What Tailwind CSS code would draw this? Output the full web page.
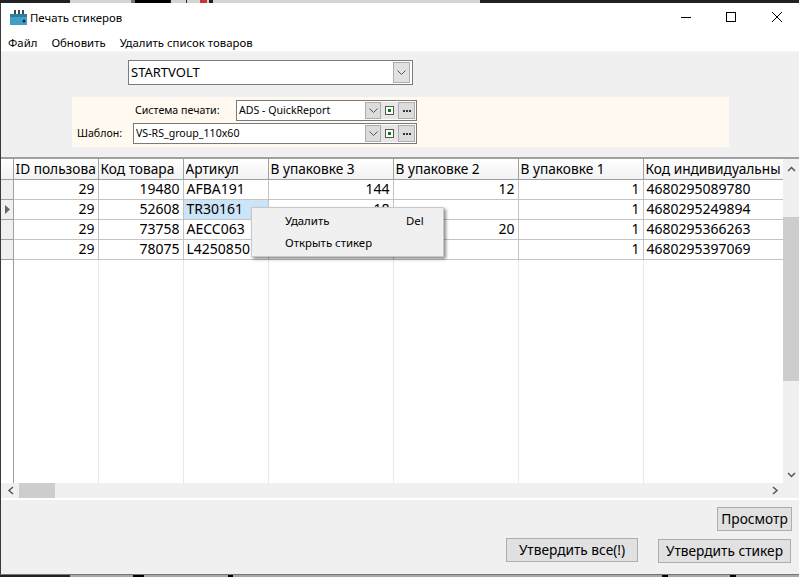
<!DOCTYPE html>
<html lang="ru">
<head>
  <meta charset="UTF-8" />
  <title>Печать стикеров</title>
  <script src="https://cdn.jsdelivr.net/npm/@tailwindcss/browser@4"></script>
</head>
<body class="w-[799px] h-[577px] overflow-hidden bg-[#f0f0f0] font-['Noto_Sans',sans-serif] text-black">
<div class="relative h-[577px] flex flex-col border-l border-[#3a3a3a]">
  <!-- other windows peeking out above -->
  <div class="h-[3px] bg-[#222] flex -ml-px">
    <div class="ml-[70px] w-[61px] bg-[#d4d4d4]"></div>
    <div class="w-[4px] bg-[#777]"></div>
    <div class="w-[35px] bg-black"></div>
    <div class="ml-px w-[15px] bg-[#d4d4d4]"></div>
    <div class="ml-px w-[13px] bg-[#d4d4d4]"></div>
    <div class="w-[7px] bg-[#c33]"></div>
    <div class="w-[2px] bg-[#d4d4d4]"></div>
    <div class="ml-[4px] w-[267px] bg-[#d4d4d4]"></div>
  </div>

  <!-- title -->
  <div class="h-[30px] bg-white flex items-center pl-[8px]">
    <svg width="20" height="18" viewBox="0 0 20 18"><rect x="5" y="1" width="2" height="4" fill="#445"/><rect x="9" y="1" width="2" height="4" fill="#445"/><rect x="13" y="1" width="2" height="4" fill="#445"/><rect x="1" y="5" width="17" height="11" fill="#3f9fc4"/><rect x="1" y="5" width="17" height="3" fill="#2d7f9f"/><circle cx="15" cy="12" r="1.5" fill="#223"/></svg>
    <span class="ml-[1px] text-[11.4px]">Печать стикеров</span>
    <div class="ml-auto flex items-center">
      <svg width="46" height="30" viewBox="0 0 46 30"><path d="M20 14.5h10" stroke="#000"/></svg>
      <svg width="46" height="30" viewBox="0 0 46 30"><rect x="19.5" y="9.5" width="9" height="9" fill="none" stroke="#000"/></svg>
      <svg width="46" height="30" viewBox="0 0 46 30"><path d="M19 9l10 10M29 9l-10 10" stroke="#000"/></svg>
    </div>
  </div>

  <!-- menu -->
  <div class="h-[18px] bg-white flex items-center gap-[14px] pl-[7px] pt-[1px] text-[11.4px]">
    <span>Файл</span><span>Обновить</span><span>Удалить список товаров</span>
  </div>
  <div class="h-[2px] bg-[#f4f4f4]"></div>

  <!-- filters -->
  <div class="h-[104px] pt-[7px] flex flex-col">
    <div class="ml-[127px] w-[285px] h-[25px] border border-[#7a7a7a] bg-white flex items-center justify-between pl-[2px] pr-[2px] text-[13px]">
      <span>STARTVOLT</span>
      <span class="w-[17px] h-[21px] bg-[#e1e1e1] border border-[#adadad] flex items-center justify-center"><svg width="9" height="5" viewBox="0 0 9 5"><path d="M0.5 0.5l4 4 4-4" fill="none" stroke="#555"/></svg></span>
    </div>
    <div class="ml-[71px] mt-[12px] w-[657px] h-[50px] bg-[#fff9ef] pt-[3px] text-[10.6px]">
      <div class="flex items-center h-[21px]">
        <span class="ml-[63px] w-[101px]">Система печати:</span>
        <div class="w-[181px] h-[21px] border border-[#7a7a7a] bg-white flex items-center pl-[2px] pr-[1px]">
          <span class="flex-1">ADS - QuickReport</span>
          <span class="w-[16px] h-[17px] bg-[#dcdcdc] border border-[#adadad] flex items-center justify-center"><svg width="9" height="5" viewBox="0 0 9 5"><path d="M0.5 0.5l4 4 4-4" fill="none" stroke="#555"/></svg></span>
          <span class="w-[17px] h-[17px] bg-[#e6e6e6] flex items-center justify-center"><span class="w-[9px] h-[9px] border border-[#555] bg-white flex items-center justify-center"><span class="w-[3px] h-[3px] bg-[#0a7a0a]"></span></span></span>
          <span class="w-[17px] h-[17px] bg-[#dcdcdc] border border-[#adadad] flex items-center justify-center gap-[1px]"><span class="w-[2px] h-[2px] bg-[#333]"></span><span class="w-[2px] h-[2px] bg-[#333]"></span><span class="w-[2px] h-[2px] bg-[#333]"></span></span>
        </div>
      </div>
      <div class="flex items-center h-[21px] mt-[2px]">
        <span class="ml-[5px] w-[56px]">Шаблон:</span>
        <div class="w-[284px] h-[21px] border border-[#7a7a7a] bg-white flex items-center pl-[2px] pr-[1px]">
          <span class="flex-1">VS-RS_group_110x60</span>
          <span class="w-[16px] h-[17px] bg-[#dcdcdc] border border-[#adadad] flex items-center justify-center"><svg width="9" height="5" viewBox="0 0 9 5"><path d="M0.5 0.5l4 4 4-4" fill="none" stroke="#555"/></svg></span>
          <span class="w-[17px] h-[17px] bg-[#e6e6e6] flex items-center justify-center"><span class="w-[9px] h-[9px] border border-[#555] bg-white flex items-center justify-center"><span class="w-[3px] h-[3px] bg-[#0a7a0a]"></span></span></span>
          <span class="w-[17px] h-[17px] bg-[#dcdcdc] border border-[#adadad] flex items-center justify-center gap-[1px]"><span class="w-[2px] h-[2px] bg-[#333]"></span><span class="w-[2px] h-[2px] bg-[#333]"></span><span class="w-[2px] h-[2px] bg-[#333]"></span></span>
        </div>
      </div>
    </div>
  </div>

  <!-- grid -->
  <div class="h-[326px] border-t-2 border-[#a0a0a0] flex bg-white overflow-hidden">
    <div class="w-[782px] overflow-hidden">
      <table class="table-fixed border-collapse w-[782px] text-[14px] leading-[18px]">
        <colgroup><col class="w-[12px]"><col class="w-[85px]"><col class="w-[85px]"><col class="w-[85px]"><col class="w-[125px]"><col class="w-[125px]"><col class="w-[125px]"><col class="w-[140px]"></colgroup>
        <thead id="head"></thead>
        <tbody id="rows"></tbody>
      </table>
    </div>
    <div class="w-[16px] bg-[#f0f0f0] flex flex-col items-center">
      <svg class="mt-[7px]" width="9" height="6" viewBox="0 0 9 6"><path d="M1 5l3.5-3.5L8 5" fill="none" stroke="#555" stroke-width="1.5"/></svg>
      <div class="mt-[45px] w-[16px] h-[164px] bg-[#cdcdcd]"></div>
      <svg class="mt-auto mb-[5px]" width="9" height="6" viewBox="0 0 9 6"><path d="M1 1l3.5 3.5L8 1" fill="none" stroke="#555" stroke-width="1.5"/></svg>
    </div>
  </div>

  <!-- horizontal scrollbar -->
  <div class="h-[15px] bg-[#f0f0f0] flex items-center pl-[6px] relative">
    <svg width="7" height="9" viewBox="0 0 7 9"><path d="M6 1L2 4.5 6 8" fill="none" stroke="#555" stroke-width="1.5"/></svg>
    <div class="ml-[5px] w-[36px] h-[15px] bg-[#cdcdcd]"></div>
    <svg class="ml-auto mr-[20px]" width="7" height="9" viewBox="0 0 7 9"><path d="M1 1l4 3.5L1 8" fill="none" stroke="#555" stroke-width="1.5"/></svg>
  </div>
  <div class="h-[2px] bg-white"></div>

  <!-- buttons -->
  <div class="flex-1 flex flex-col items-end pr-[7px] pt-[7px] text-[13.7px]">
    <button class="w-[75px] h-[24px] bg-[#e1e1e1] border border-[#adadad]">Просмотр</button>
    <div class="flex items-start mt-[7px] mr-[1px]">
      <button class="w-[132px] h-[24px] bg-[#e1e1e1] border border-[#adadad]">Утвердить все(!)</button>
      <button class="ml-[20px] mt-[1px] w-[133px] h-[24px] bg-[#e1e1e1] border border-[#adadad]">Утвердить стикер</button>
    </div>
  </div>

  <!-- context menu -->
  <div class="absolute left-[250px] top-[207px] w-[193px] h-[50px] bg-[#f0f0f0] border border-[#c8c8c8] shadow-[2px_2px_3px_rgba(0,0,0,0.45)] text-[11.4px] pl-[33px] pt-[2px]">
    <div class="h-[22px] flex items-center"><span class="w-[121px]">Удалить</span><span>Del</span></div>
    <div class="h-[22px] flex items-center">Открыть стикер</div>
  </div>

  <!-- windows below -->
  <div class="absolute -left-px right-0 bottom-0 h-[3px] bg-[#a8a8a8] border-t border-[#777] flex">
    <div class="w-[70px] bg-[#222]"></div>
    <div class="ml-[63px] w-[11px] bg-black"></div>
    <div class="ml-[84px] w-[5px] bg-black"></div>
    <div class="ml-[429px] w-[6px] bg-black"></div>
    <div class="ml-[62px] w-[6px] bg-black"></div>
  </div>
</div>

<script>
  const heads = ["ID пользователя", "Код товара", "Артикул", "В упаковке 3", "В упаковке 2", "В упаковке 1", "Код индивидуальный"];
  const data = [
    [29, 19480, "AFBA191", 144, 12, 1, "4680295089780"],
    [29, 52608, "TR30161", 18, "", 1, "4680295249894"],
    [29, 73758, "AECC063", "", 20, 1, "4680295366263"],
    [29, 78075, "L4250850", "", "", 1, "4680295397069"]
  ];
  const left = [2, 6];
  const thCls = "h-[20px] p-0 border-r border-b border-[#a0a0a0] bg-gradient-to-b from-white to-[#f2f2f2] font-normal text-left";

  let head = `<tr><th class="${thCls}"></th>`;
  for (const h of heads) {
    head += `<th class="${thCls}"><div class="ml-[2px] mr-[2px] overflow-hidden whitespace-nowrap text-[13.7px]">${h}</div></th>`;
  }
  document.getElementById("head").innerHTML = head + "</tr>";

  let html = "";
  data.forEach((row, r) => {
    const mark = r === 1 ? `<svg class="ml-[4px]" width="5" height="9" viewBox="0 0 5 9"><path d="M0 0l5 4.5L0 9z" fill="#666"/></svg>` : "";
    html += `<tr><td class="h-[20px] p-0 border-r border-b border-[#a0a0a0] bg-[#f0f0f0]">${mark}</td>`;
    row.forEach((v, c) => {
      const sel = r === 1 && c === 2 ? " bg-[#cce4f7]" : "";
      const align = left.includes(c) ? "text-left pl-[3px]" : "text-right pr-[3px]";
      html += `<td class="h-[20px] p-0 border-r border-b border-[#c4c4c4] whitespace-nowrap overflow-hidden ${align}${sel}">${v}</td>`;
    });
    html += "</tr>";
  });
  html += `<tr><td class="h-[224px] p-0 border-r border-[#a0a0a0]"></td>`;
  for (let i = 0; i < 7; i++) html += `<td class="h-[224px] p-0 border-r border-[#e8e8e8]"></td>`;
  document.getElementById("rows").innerHTML = html + "</tr>";
</script>
</body>
</html>
